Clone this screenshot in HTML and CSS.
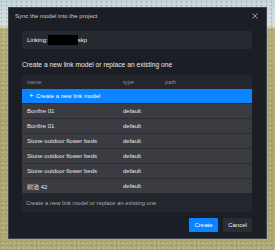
FILE: index.html
```html
<!DOCTYPE html>
<html>
<head>
    <link rel="stylesheet" href="styles.css">
</head>
<body>
    <div class="dialog">
        <div class="dialog-head">
            <span class="dialog-title">Sync the model into the project</span>
            <svg class="close" width="6" height="6" viewBox="0 0 6 6">
                <path d="M0.5 0.5 L5.5 5.5 M5.5 0.5 L0.5 5.5" stroke="#9a9da3" stroke-width="1"/>
            </svg>
        </div>

        <div class="dialog-body">
            <div class="linking">
                <span>Linking:</span><span class="redacted"></span><span>skp</span>
            </div>

            <div class="section-title">Create a new link model or replace an existing one</div>

            <div class="panel">
                <div class="row head">
                    <span>name</span><span>type</span><span>path</span>
                </div>
                <div class="row create">
                    <span class="plus">+</span><span>Create a new link model</span>
                </div>
                <div class="row item"><span>Bonfire 01</span><span>default</span><span></span></div>
                <div class="row item"><span>Bonfire 01</span><span>default</span><span></span></div>
                <div class="row item"><span>Stone outdoor flower beds</span><span>default</span><span></span></div>
                <div class="row item"><span>Stone outdoor flower beds</span><span>default</span><span></span></div>
                <div class="row item"><span>Stone outdoor flower beds</span><span>default</span><span></span></div>
                <div class="row item"><span>树池 42</span><span>default</span><span></span></div>
                <div class="panel-foot">Create a new link model or replace an existing one</div>
            </div>

            <div class="actions">
                <button class="btn primary">Create</button>
                <button class="btn">Cancel</button>
            </div>
        </div>
    </div>
</body>
</html>
```

FILE: styles.css
```css
body {
    margin: 0;
    width: 275px;
    height: 250px;
    overflow: hidden;
    font-family: 'Liberation Sans', Arial, 'Noto Sans CJK SC', sans-serif;
    background:
        radial-gradient(circle at 30% 40%, rgba(120,100,60,0.35) 0.6px, transparent 1.2px) 0 0 / 5px 4px,
        radial-gradient(circle at 70% 60%, rgba(220,215,170,0.4) 0.6px, transparent 1.2px) 0 0 / 4px 5px,
        linear-gradient(to bottom, #c4d5df 0px, #d6e0e4 22px, #dcdfd8 26px, #b6ae7c 29px, #aba572 120px, #b0a774 250px);
    display: flex;
}

.dialog {
    margin: 7px 8px;
    width: 259px;
    height: 232px;
    box-sizing: border-box;
    background: #1b1e25;
    border: 1px solid #40444b;
    display: flex;
    flex-direction: column;
}

.dialog-head {
    height: 15px;
    padding: 0 8px 0 6px;
    display: flex;
    justify-content: space-between;
    align-items: center;
}

.dialog-title {
    font-size: 6px;
    color: #c9cbcf;
}

.dialog-body {
    padding: 0 14px 0 13px;
    display: flex;
    flex-direction: column;
}

.linking {
    margin-top: 8px;
    height: 18px;
    background: #252930;
    display: flex;
    align-items: center;
    padding-left: 5px;
    font-size: 6px;
    color: #eceef0;
}

.redacted {
    width: 30px;
    height: 10px;
    background: #000;
}

.section-title {
    margin-top: 12px;
    height: 14px;
    font-size: 6.7px;
    color: #e8e9eb;
}

.panel {
    background: #23262d;
    display: flex;
    flex-direction: column;
}

.row {
    display: grid;
    grid-template-columns: 96px 42px 1fr;
    align-items: center;
    padding-left: 5px;
    font-size: 6px;
    color: #e4e5e7;
}

.row.head {
    height: 14px;
    color: #8b8e94;
    font-size: 5.8px;
}

.row.create {
    height: 14px;
    background: #0a84ff;
    color: #fff;
    display: flex;
    padding-left: 7px;
}

.plus {
    width: 7px;
    font-size: 8px;
    line-height: 8px;
}

.row.item {
    height: 14px;
    background: #3a3c41;
    border-top: 1px solid #2b2d31;
}

.panel-foot {
    height: 19px;
    display: flex;
    align-items: center;
    padding-left: 4px;
    font-size: 5.8px;
    color: #a9acb1;
}

.actions {
    margin-top: 6px;
    display: flex;
    justify-content: flex-end;
    gap: 5px;
}

.btn {
    width: 29px;
    height: 14px;
    padding: 0;
    border: none;
    border-radius: 1px;
    font-family: inherit;
    font-size: 6px;
    color: #eceef0;
    background: #2a2d33;
}

.btn.primary {
    background: #0a84ff;
    color: #fff;
    box-shadow: 0 0 0 1px #0b2240;
}
```
